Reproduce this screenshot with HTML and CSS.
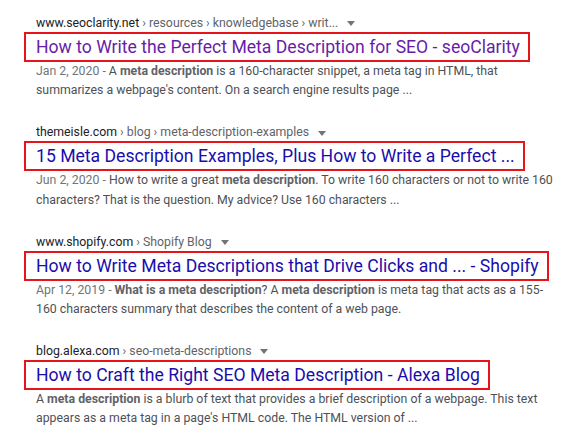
FILE: index.html
```html
<!DOCTYPE html>
<html lang="en">
<head>
    <meta charset="UTF-8">
    <title>meta description - search results</title>
    <link rel="stylesheet" href="styles.css">
</head>
<body>
    <div class="results">
        <div class="result">
            <div class="cite">www.seoclarity.net <span class="crumb">› resources › knowledgebase › writ...</span><span class="arrow"></span></div>
            <a class="title visited" href="#">How to Write the Perfect Meta Description for SEO - seoClarity</a>
            <p class="snippet"><span class="date">Jan 2, 2020 - </span>A <b>meta description</b> is a 160-character snippet, a meta tag in HTML, that summarizes a webpage's content. On a search engine results page ...</p>
        </div>

        <div class="result">
            <div class="cite">themeisle.com <span class="crumb">› blog › meta-description-examples</span><span class="arrow"></span></div>
            <a class="title" href="#">15 Meta Description Examples, Plus How to Write a Perfect ...</a>
            <p class="snippet"><span class="date">Jun 2, 2020 - </span>How to write a great <b>meta description</b>. To write 160 characters or not to write 160 characters? That is the question. My advice? Use 160 characters ...</p>
        </div>

        <div class="result">
            <div class="cite">www.shopify.com <span class="crumb">› Shopify Blog</span><span class="arrow"></span></div>
            <a class="title" href="#">How to Write Meta Descriptions that Drive Clicks and ... - Shopify</a>
            <p class="snippet"><span class="date">Apr 12, 2019 - </span><b>What is a meta description</b>? A <b>meta description</b> is meta tag that acts as a 155-160 characters summary that describes the content of a web page.</p>
        </div>

        <div class="result">
            <div class="cite">blog.alexa.com <span class="crumb">› seo-meta-descriptions</span><span class="arrow"></span></div>
            <a class="title" href="#">How to Craft the Right SEO Meta Description - Alexa Blog</a>
            <p class="snippet">A <b>meta description</b> is a blurb of text that provides a brief description of a webpage. This text appears as a meta tag in a page's HTML code. The HTML version of ...</p>
        </div>
    </div>
</body>
</html>
```

FILE: styles.css
```css
* {
    margin: 0;
    padding: 0;
    box-sizing: border-box;
}

body {
    font-family: Roboto, 'Liberation Sans', Arial, sans-serif;
    background: #fff;
    color: #4d5156;
}

.results {
    padding: 15px 0 0 24px;
    width: 570px;
}

.result {
    margin-bottom: 23.5px;
}

.cite {
    font-size: 12.3px;
    line-height: 17px;
    color: #202124;
    padding-left: 12px;
}

.crumb {
    color: #5f6368;
}

.arrow {
    display: inline-block;
    margin-left: 9px;
    border-left: 4px solid transparent;
    border-right: 4px solid transparent;
    border-top: 5px solid #70757a;
    vertical-align: middle;
}

.title {
    display: inline-block;
    border: 2px solid #e8141b;
    padding: 0 8px 0 10px;
    font-size: 17.6px;
    line-height: 26px;
    color: #1a0dab;
    text-decoration: none;
    white-space: nowrap;
}

.title.visited {
    color: #681da8;
}

.snippet {
    font-size: 12.3px;
    line-height: 19.4px;
    padding-left: 12px;
    width: 532px;
}

.date {
    color: #70757a;
}

.snippet b {
    color: #5f6368;
}
```
